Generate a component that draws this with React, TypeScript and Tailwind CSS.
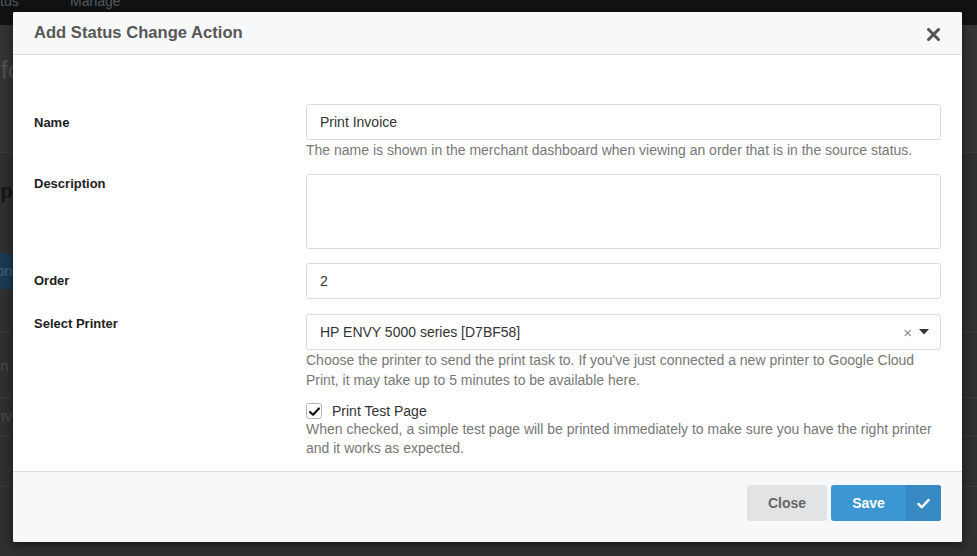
import React from "react";

function XIcon() {
  return (
    <svg width="13" height="13" viewBox="0 0 13 13">
      <path d="M1.5 1.5 L11.5 11.5 M11.5 1.5 L1.5 11.5" stroke="#555" strokeWidth="3" strokeLinecap="square" />
    </svg>
  );
}

function Check({ color, size }: { color: string; size: number }) {
  return (
    <svg width={size} height={size} viewBox="0 0 16 16">
      <path d="M2.5 8.5 L6.2 12 L13.5 4.2" fill="none" stroke={color} strokeWidth="2.6" strokeLinecap="round" strokeLinejoin="round" />
    </svg>
  );
}

function Background() {
  return (
    <div className="flex h-full w-full flex-col bg-[#2f2f2f]">
      <div className="flex h-[25px] shrink-0 items-start bg-[#101214] text-[14px] leading-[10px] text-[#55585c]">
        <span className="-mt-[4px] w-[70px]">tus</span>
        <span className="-mt-[4px]">Manage</span>
      </div>
      <div className="flex h-[128px] shrink-0 items-start border-b border-[#3a3a3a] bg-[#333333] pt-[30px]">
        <div className="flex w-[13px] overflow-hidden">
          <span className="-ml-[21px] whitespace-nowrap text-[26px] leading-[30px] text-[#4f4f4f]">Info</span>
        </div>
      </div>
      <div className="flex h-[151px] shrink-0 flex-col justify-start pt-[26px]">
        <div className="flex w-[13px] overflow-hidden">
          <span className="-ml-[44px] whitespace-nowrap text-[20px] font-bold leading-[24px] text-[#151515]">Company</span>
        </div>
        <div className="mt-[50px] flex h-[36px] w-[13px] items-center overflow-hidden bg-[#1a3a52] text-[15px] text-[#3e6280]">
          <span className="-ml-[4px]">on</span>
        </div>
      </div>
      <div className="h-[29px] shrink-0 border-b border-[#3a3a3a]"></div>
      <div className="flex h-[65px] shrink-0 items-end border-b border-[#3a3a3a] pb-[22px] text-[15px] leading-[18px] text-[#4a4a4a]">
        <div className="flex w-[13px] overflow-hidden">
          <span className="-ml-[4px]">In</span>
        </div>
      </div>
      <div className="flex h-[38px] shrink-0 items-center border-b border-[#3a3a3a] text-[15px] text-[#4a4a4a]">
        <div className="flex w-[13px] overflow-hidden">
          <span className="-ml-[8px] whitespace-nowrap">Invo</span>
        </div>
      </div>
      <div className="h-[51px] shrink-0 border-b border-[#3a3a3a]"></div>
    </div>
  );
}

export default function App() {
  const help = "text-[14px] leading-[20px] text-[#777]";
  const label = "text-[13px] font-bold leading-[18px] text-[#222]";
  const input =
    "h-[36px] w-full rounded-[3px] border border-[#dcdcdc] bg-white px-[13px] text-[14px] leading-[35px] text-[#333]";
  return (
    <div className="relative h-[556px] w-[977px] overflow-hidden font-['Liberation_Sans',Arial,Helvetica,sans-serif]">
      <Background />
      <div className="absolute left-[13px] top-[12px] flex h-[530px] w-[949px] flex-col overflow-hidden rounded-[2px] bg-white shadow-[0_3px_10px_rgba(0,0,0,0.5)]">
        <div className="flex h-[43px] shrink-0 items-center justify-between border-b border-[#dedede] bg-[#f7f8fa] pl-[21px] pr-[22px] pt-[1px]">
          <span className="text-[16.6px] font-bold text-[#575757]">Add Status Change Action</span>
          <span className="mt-[2px] flex">
            <XIcon />
          </span>
        </div>
        <div className="flex-1 px-[21px] pt-[49px]">
          <div className="grid grid-cols-[272px_1fr]">
            <div className={`${label} pt-[10px]`}>Name</div>
            <div>
              <div className={input}>Print Invoice</div>
              <div className={help}>
                The name is shown in the merchant dashboard when viewing an order that is in the source status.
              </div>
            </div>
          </div>
          <div className="mt-[14px] grid grid-cols-[272px_1fr]">
            <div className={`${label} pt-[1px]`}>Description</div>
            <div className="h-[75px] w-full rounded-[3px] border border-[#dcdcdc] bg-white"></div>
          </div>
          <div className="mt-[14px] grid grid-cols-[272px_1fr]">
            <div className={`${label} pt-[9px]`}>Order</div>
            <div className={input}>2</div>
          </div>
          <div className="mt-[15px] grid grid-cols-[272px_1fr]">
            <div className={`${label} pt-[1px]`}>Select Printer</div>
            <div>
              <div className={`${input} flex items-center justify-between pr-[11px]`}>
                <span>HP ENVY 5000 series [D7BF58]</span>
                <span className="flex items-center gap-[7px]">
                  <span className="text-[15px] leading-none text-[#888]">×</span>
                  <svg width="10" height="6" viewBox="0 0 10 6">
                    <path d="M0 0 L10 0 L5 5.5 Z" fill="#333" />
                  </svg>
                </span>
              </div>
              <div className={help}>
                Choose the printer to send the print task to. If you've just connected a new printer to Google Cloud
                Print, it may take up to 5 minutes to be available here.
              </div>
              <div className="mt-[12px] flex h-[18px] items-center gap-[10px]">
                <span className="flex h-[16px] w-[16px] items-center justify-center rounded-[3px] border border-[#b5b5b5] bg-white">
                  <Check color="#111" size={13} />
                </span>
                <span className="text-[14px] leading-[18px] text-[#333]">Print Test Page</span>
              </div>
              <div className="text-[14px] leading-[19px] text-[#777]">
                When checked, a simple test page will be printed immediately to make sure you have the right printer
                and it works as expected.
              </div>
            </div>
          </div>
        </div>
        <div className="flex h-[71px] shrink-0 items-start justify-end gap-[4px] border-t border-[#dedede] bg-[#f7f8fa] pr-[21px] pt-[13px]">
          <button className="flex h-[36px] w-[80px] items-center justify-center rounded-[3px] bg-[#e2e3e5] text-[14px] font-bold text-[#666]">
            Close
          </button>
          <button className="flex h-[36px] w-[110px] overflow-hidden rounded-[3px] bg-[#3b96d1] text-[14px] font-bold text-white">
            <span className="flex h-full w-[75px] items-center justify-center">Save</span>
            <span className="flex h-full w-[35px] items-center justify-center bg-[#3689c3]">
              <Check color="#fff" size={15} />
            </span>
          </button>
        </div>
      </div>
    </div>
  );
}
